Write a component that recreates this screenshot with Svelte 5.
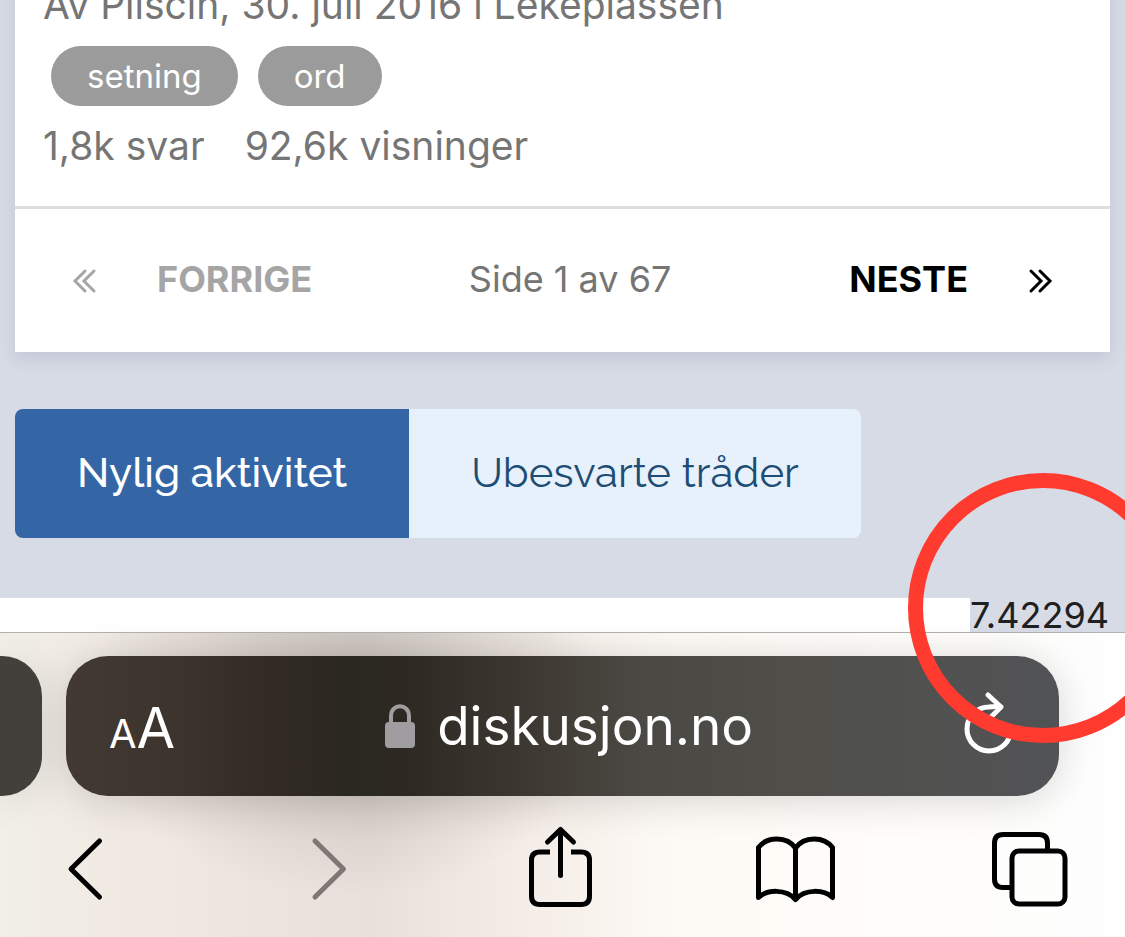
<script>
    let tags = ['setning', 'ord'];
    let tabs = ['Nylig aktivitet', 'Ubesvarte tråder'];
    let active = 0;
</script>

<div class="screen">
    <main>
        <section class="card">
            <header>
                <p class="byline">Av Pliscin, 30. juli 2016 i Lekeplassen</p>
                <div class="tags">
                    {#each tags as tag}
                        <a class="tag" href="#{tag}">{tag}</a>
                    {/each}
                </div>
                <p class="stats"><span>1,8k svar</span><span>92,6k visninger</span></p>
            </header>
            <nav class="pager" aria-label="Sider">
                <a class="previous" href="#forrige">
                    <svg width="24" height="24" viewBox="0 0 24 24"><path d="M12 2L2 12L12 22M21 2L11 12L21 22"/></svg>
                    <span>FORRIGE</span>
                </a>
                <span class="count">Side 1 av 67</span>
                <a class="next" href="#neste">
                    <span>NESTE</span>
                    <svg width="24" height="24" viewBox="0 0 24 24"><path d="M3 2L13 12L3 22M12 2L22 12L12 22"/></svg>
                </a>
            </nav>
        </section>

        <div class="tabs">
            {#each tabs as tab, i}
                <button class:active={active === i} on:click={() => active = i}>{tab}</button>
            {/each}
        </div>

        <div class="strip"><span>7.42294</span></div>
    </main>

    <footer>
        <div class="address-row">
            <div class="neighbour"></div>
            <div class="address">
                <button class="text-size" aria-label="Tekststørrelse"><small>A</small><span>A</span></button>
                <a class="url" href="#adresse">
                    <svg width="30" height="44" viewBox="0 0 30 44">
                        <path d="M6 20V12C6 -1 24 -1 24 12V20" fill="none" stroke="#a09da0" stroke-width="4"/>
                        <rect y="18" width="30" height="26" rx="4" fill="#a09da0"/>
                    </svg>
                    <span>diskusjon.no</span>
                </a>
                <button aria-label="Last inn på nytt">
                    <svg class="reload" width="52" height="64" viewBox="0 0 52 64">
                        <path d="M48 35A22 22 0 1 1 26 13Q32 12 38 13M25 1L38 13L27 24"/>
                    </svg>
                </button>
            </div>
        </div>
        <nav class="tools" aria-label="Nettleser">
            <button aria-label="Tilbake">
                <svg width="80" height="84" viewBox="0 0 80 84"><path d="M54.5 15L26 43L54.5 71"/></svg>
            </button>
            <button class="disabled" aria-label="Frem" disabled>
                <svg width="80" height="84" viewBox="0 0 80 84"><path d="M34 15L62.5 43L34 71"/></svg>
            </button>
            <button aria-label="Del">
                <svg width="80" height="84" viewBox="0 0 80 84">
                    <path d="M43.5 4V49.5M30.5 16L43.5 3.5L56.5 16"/>
                    <path class="butt" d="M33 26H23Q14.5 26 14.5 34V70Q14.5 78.5 23 78.5H64Q72.5 78.5 72.5 70V34Q72.5 26 64 26H54"/>
                </svg>
            </button>
            <button aria-label="Bokmerker">
                <svg width="80" height="84" viewBox="0 0 80 84">
                    <path d="M42.5 22C34 10 14 10 5.5 21.5V71.5C14 63.5 33 62.5 42.5 73.5C52 62.5 71 63.5 79.5 71.5V21.5C71 10 51 10 42.5 22V73"/>
                </svg>
            </button>
            <button aria-label="Faner">
                <svg width="80" height="84" viewBox="0 0 80 84">
                    <path class="butt" d="M21 61.5H14Q5.5 61.5 5.5 53V17Q5.5 8.5 14 8.5H50Q58.5 8.5 58.5 17V24"/>
                    <rect x="23" y="25" width="53" height="53" rx="7"/>
                </svg>
            </button>
        </nav>
    </footer>

    <!-- hand-drawn marker round the number -->
    <svg class="marker" width="270" height="270" viewBox="0 0 270 270">
        <circle cx="135" cy="135" r="127.5"/>
    </svg>
</div>

<style>
    :global(body) {
        margin: 0;
    }
    .screen {
        position: relative;
        display: flex;
        flex-direction: column;
        min-height: 100vh;
        overflow: hidden;
        background: #d7dbe6;
        font-family: Inter, "Liberation Sans", sans-serif;
        color: #757575;
    }
    a {
        color: inherit;
        text-decoration: none;
    }
    button {
        display: flex;
        padding: 0;
        border: 0;
        background: none;
        color: inherit;
        font: inherit;
    }
    p {
        margin: 0;
    }
    svg {
        display: block;
        overflow: visible;
        fill: none;
    }

    .card {
        margin: 0 15px;
        background: white;
        box-shadow: 0 6px 16px rgba(60, 60, 90, 0.13);
    }
    header {
        padding: 0 28px 36px;
        border-bottom: 3px solid #dedede;
    }
    /* the page is scrolled past the top of this line */
    .byline {
        margin-top: -19px;
    }
    .byline, .stats {
        display: flex;
        gap: 40px;
        font-size: 39px;
        line-height: 48px;
    }
    .tags {
        display: flex;
        gap: 20px;
        padding: 17px 8px 16px;
    }
    .tag {
        padding: 0 36px;
        border-radius: 30px;
        background: #9b9b9b;
        color: white;
        font-size: 33px;
        line-height: 60px;
    }
    .pager {
        display: grid;
        grid-template-columns: 26fr auto 25fr;
        align-items: center;
        padding: 47px 58px 49px;
        font-size: 36px;
        line-height: 47px;
    }
    .pager a {
        display: flex;
        align-items: center;
        gap: 60px;
        font-weight: 700;
    }
    .pager svg {
        padding-top: 2px;
        stroke: currentColor;
        stroke-width: 3px;
        stroke-linecap: round;
    }
    .pager .previous {
        color: #a5a5a5;
    }
    .pager .next {
        justify-content: flex-end;
        color: black;
    }

    .tabs {
        display: flex;
        margin: 57px 15px 60px;
    }
    .tabs button {
        padding: 0 62px 2px;
        border-radius: 0 8px 8px 0;
        background: #e7f1fb;
        color: #1d4d75;
        font-family: Raleway, Lato, sans-serif;
        font-size: 42px;
        line-height: 127px;
    }
    .tabs button.active {
        border-radius: 8px 0 0 8px;
        background: #3466a6;
        color: white;
        font-weight: 500;
    }

    .strip {
        display: flex;
        justify-content: flex-end;
        background: white;
    }
    .strip span {
        padding-right: 16px;
        background: #d7dbe6;
        color: #1f2022;
        font-size: 36px;
        line-height: 34px;
    }

    footer {
        flex: 1;
        border-top: 1px solid #b3b0b0;
        background:
            radial-gradient(ellipse 260px 190px at 31% 24%, rgba(70, 75, 65, 0.26), rgba(70, 75, 65, 0)),
            linear-gradient(90deg, #f1efe7 0%, #f0e7e1 16%, #eae0db 33%, #f5ede7 47%, #fdfaf5 60%, #fefdfa 80%, #fefefe 100%);
    }
    .address-row {
        display: flex;
        gap: 24px;
        padding: 23px 66px 30px 0;
    }
    .neighbour {
        width: 42px;
        border-radius: 0 40px 40px 0;
        background: #42403a;
        box-shadow: 0 4px 40px rgba(0, 0, 0, 0.12);
    }
    .address {
        display: flex;
        flex: 1;
        align-items: center;
        justify-content: space-between;
        box-sizing: border-box;
        height: 140px;
        padding: 0 44px 0 43px;
        border-radius: 42px;
        background: linear-gradient(90deg, #423933 0%, #3c332c 12%, #352b26 19%, #2b2822 28%, #2d2922 34%, #3d3731 46%, #4a4842 57%, #504f4a 75%, #525356 100%);
        box-shadow: 0 4px 40px rgba(0, 0, 0, 0.16);
        color: white;
    }
    .text-size {
        align-items: baseline;
        padding-top: 4px;
        font-size: 56px;
    }
    .text-size small {
        font-size: 40px;
    }
    .url {
        display: flex;
        align-items: center;
        gap: 22px;
        font-size: 53px;
    }
    .reload {
        stroke: white;
        stroke-width: 5px;
        stroke-linecap: round;
        stroke-linejoin: round;
    }
    .tools {
        display: flex;
        justify-content: space-between;
        padding: 0 56px 27px 45px;
        color: black;
    }
    .tools svg {
        stroke: currentColor;
        stroke-width: 5px;
        stroke-linecap: round;
        stroke-linejoin: round;
    }
    .tools .butt {
        stroke-linecap: butt;
    }
    .tools .disabled {
        color: #7f7675;
    }

    .marker {
        position: absolute;
        top: 473px;
        right: -53px;
        stroke: #ff3b30;
        stroke-width: 15px;
        pointer-events: none;
    }
</style>
